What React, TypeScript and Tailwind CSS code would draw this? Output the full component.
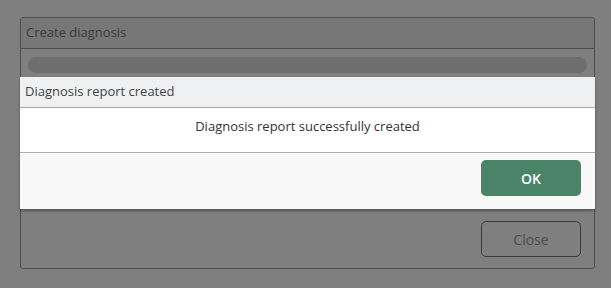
export default function App() {
  return (
    <div
      className="relative h-[288px] w-[611px] overflow-hidden bg-white"
      style={{ fontFamily: '"Open Sans", "Noto Sans", sans-serif' }}
    >
      {/* background panel */}
      <div className="pt-[17px] pl-[20px]">
        <div className="flex h-[252px] w-[575px] flex-col rounded-[3px] border border-[#9a9a9a] bg-white">
          <div className="flex h-[31px] items-center border-b border-[#9a9a9a] bg-[#eeeeee] px-[5px] text-[13px] text-[#777]">
            Create diagnosis
          </div>
          <div className="px-[7px] pt-[8px]">
            <div className="h-[16px] rounded-full bg-[#dcdcdc]" />
          </div>
          <div className="mt-auto flex justify-end px-[13px] pb-[11px]">
            <button className="h-[36px] w-[100px] rounded-[5px] border border-[#777] bg-white text-[14px] text-[#999]">
              Close
            </button>
          </div>
        </div>
      </div>

      {/* overlay */}
      <div className="absolute inset-0 bg-black/50" />

      {/* modal */}
      <div className="absolute top-[77px] left-[20px] flex w-[575px] flex-col rounded-[3px] bg-white shadow-[0_2px_3px_rgba(0,0,0,0.35)]">
        <div className="flex h-[31px] items-center border-b border-[#a8a8a8] bg-[#eef0f2] px-[5px] text-[13px] text-[#444]">
          Diagnosis report created
        </div>
        <div className="flex h-[45px] items-start justify-center border-b border-[#b0b0b0] pt-[9px] text-[13px] text-[#333]">
          Diagnosis report successfully created
        </div>
        <div className="flex h-[56px] items-start justify-end bg-[#f8f8f8] px-[14px] pt-[7px]">
          <button className="h-[36px] w-[100px] rounded-[5px] bg-[#4b8369] text-[14px] font-semibold text-white">
            OK
          </button>
        </div>
      </div>
    </div>
  );
}
